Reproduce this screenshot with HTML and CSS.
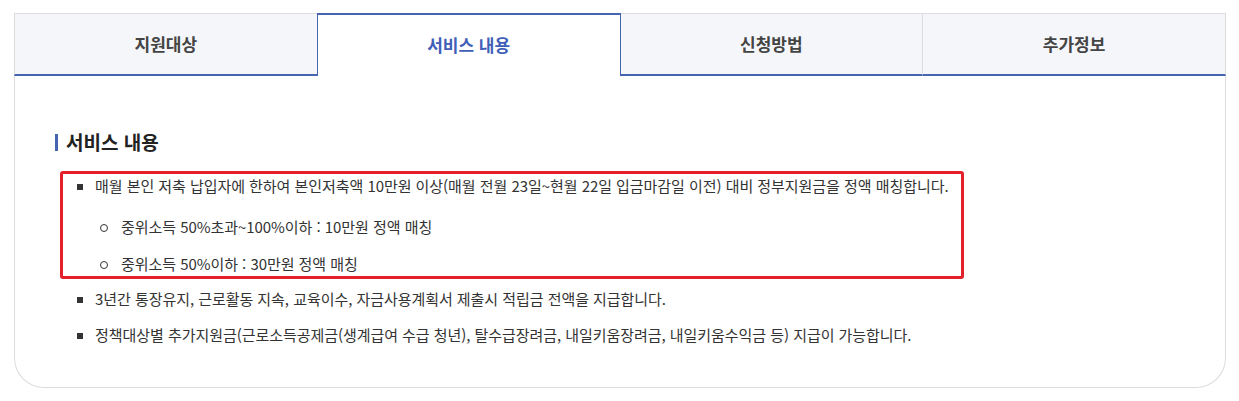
FILE: index.html
```html
<!DOCTYPE html>
<html lang="ko">
<head>
    <meta charset="UTF-8">
    <meta name="viewport" content="width=device-width, initial-scale=1.0">
    <title>서비스 내용</title>
    <link rel="stylesheet" href="styles.css">
</head>
<body>
    <div class="tab-wrap">
        <ul class="tabs">
            <li class="tab">지원대상</li>
            <li class="tab active">서비스 내용</li>
            <li class="tab">신청방법</li>
            <li class="tab">추가정보</li>
        </ul>

        <div class="tab-panel">
            <h3 class="title">서비스 내용</h3>
            <ul class="list">
                <li class="highlight">
                    매월 본인 저축 납입자에 한하여 본인저축액 10만원 이상(매월 전월 23일~현월 22일 입금마감일 이전) 대비 정부지원금을 정액 매칭합니다.
                    <ul class="sub-list">
                        <li>중위소득 50%초과~100%이하 : 10만원 정액 매칭</li>
                        <li>중위소득 50%이하 : 30만원 정액 매칭</li>
                    </ul>
                </li>
                <li>3년간 통장유지, 근로활동 지속, 교육이수, 자금사용계획서 제출시 적립금 전액을 지급합니다.</li>
                <li>정책대상별 추가지원금(근로소득공제금(생계급여 수급 청년), 탈수급장려금, 내일키움장려금, 내일키움수익금 등) 지급이 가능합니다.</li>
            </ul>
        </div>
    </div>
</body>
</html>
```

FILE: styles.css
```css
* {
    box-sizing: border-box;
}
body {
    margin: 0;
    padding: 13px 13px 0 14px;
    font-family: "Noto Sans CJK KR", "Noto Sans", sans-serif;
    color: #333;
    background-color: #fff;
}
ul {
    margin: 0;
    padding: 0;
    list-style: none;
}
.tabs {
    display: flex;
}
.tab {
    flex: 1;
    height: 63px;
    line-height: 60px;
    text-align: center;
    font-size: 17px;
    font-weight: bold;
    color: #444;
    background-color: #f4f6fa;
    border-top: 1px solid #ddd;
    border-right: 1px solid #ddd;
    border-bottom: 2px solid #4565b0;
}
.tab:first-child {
    border-left: 1px solid #ddd;
}
.tab.active {
    color: #3f5fb8;
    background-color: #fff;
    border: 1px solid #4565b0;
    border-top-width: 2px;
    border-bottom: none;
    line-height: 59px;
    margin-left: -1px;
}
.tab-panel {
    border: 1px solid #ddd;
    border-top: none;
    border-radius: 0 0 30px 30px;
    padding: 54px 40px 41px 40px;
}
.title {
    position: relative;
    margin: 0 0 17px 0;
    padding-left: 11px;
    font-size: 19px;
    line-height: 24px;
    color: #222;
}
.title::before {
    content: "";
    position: absolute;
    left: 0;
    top: 4px;
    width: 3px;
    height: 17px;
    background-color: #4565b0;
}
.list {
    font-size: 15px;
    line-height: 22px;
    letter-spacing: -0.05px;
    color: #333;
}
.list > li {
    position: relative;
    padding-left: 40px;
    margin-bottom: 14px;
}
.list > li:last-child {
    margin-bottom: 0;
}
.list > li::before {
    content: "";
    position: absolute;
    left: 22px;
    top: 9px;
    width: 6px;
    height: 6px;
    background-color: #333;
}
.list > li.highlight {
    width: fit-content;
    margin-left: 5px;
    margin-bottom: 9px;
    padding: 1px 12px 1px 32px;
    border: 3px solid #e4202c;
    border-radius: 3px;
}
.list > li.highlight::before {
    left: 14px;
    top: 10px;
}
.sub-list {
    margin-top: 19px;
}
.sub-list li {
    position: relative;
    padding-left: 26px;
    margin-bottom: 15px;
}
.sub-list li:last-child {
    margin-bottom: 0;
}
.sub-list li::before {
    content: "";
    position: absolute;
    left: 5px;
    top: 8px;
    width: 6px;
    height: 6px;
    border: 1px solid #333;
    border-radius: 50%;
}
```
